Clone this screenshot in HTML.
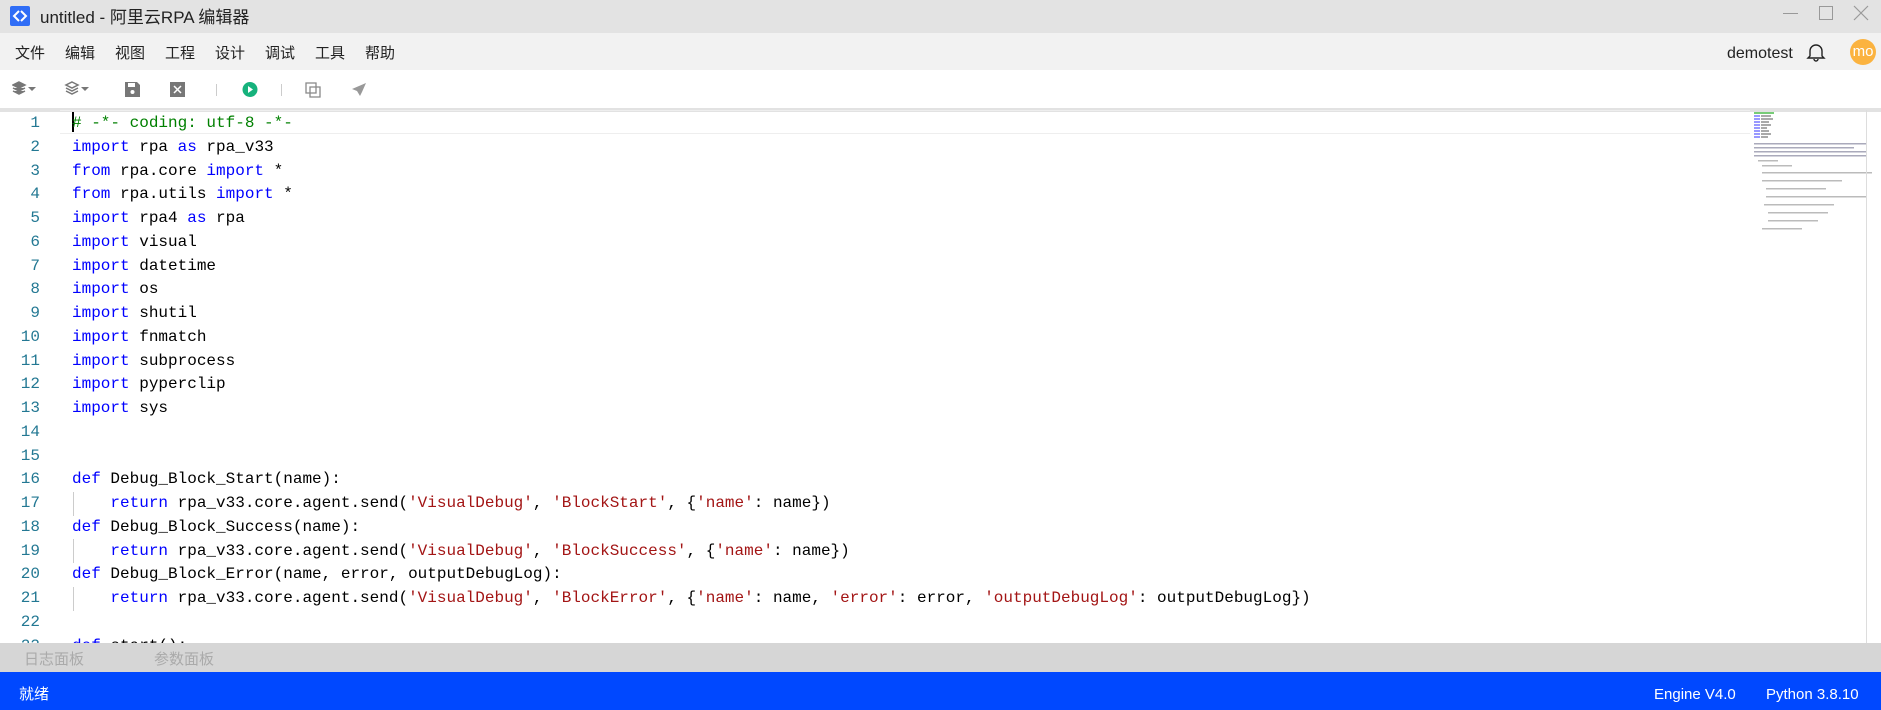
<!DOCTYPE html>
<html><head><meta charset="utf-8"><style>
*{margin:0;padding:0;box-sizing:border-box}
body{width:1881px;height:710px;overflow:hidden;background:#fff;font-family:"Liberation Sans","Noto Sans CJK SC",sans-serif;position:relative}
.abs{position:absolute}
#title{left:0;top:0;width:1881px;height:33px;background:#e3e3e3}
#menu{left:0;top:33px;width:1881px;height:37px;background:#f2f2f2}
#menu span{position:absolute;top:9px;font-size:15px;color:#222}
#tool{left:0;top:70px;width:1881px;height:38px;background:#fff}
#sep{left:0;top:108px;width:1881px;height:4px;background:#e2e2e2}
#code{left:0;top:110px;width:1750px;height:533px;overflow:hidden;font-family:"Liberation Mono",monospace;font-size:16px}
.ln{position:absolute;left:0;width:40px;text-align:right;color:#237893}
.tx{position:absolute;left:72px;white-space:pre;color:#000}
.k{color:#0000ff}.s{color:#a31515}.c{color:#008000}
#tabs{left:0;top:643px;width:1881px;height:29px;background:#d6d6d6}
#status{left:0;top:672px;width:1881px;height:38px;background:#0048ff;color:#fff;font-size:15px}
</style></head><body>
<div id="title" class="abs">
 <div class="abs" style="left:10px;top:6px;width:20px;height:20px;background:#2f6df6;border-radius:2px"></div>
 <svg class="abs" style="left:10px;top:6px" width="20" height="20"><path d="M9 5L4 10L9 15M11 5L16 10L11 15" stroke="#fff" stroke-width="2" fill="none"/></svg>
 <div class="abs" style="left:40px;top:3px;font-size:17px;color:#222">untitled - 阿里云RPA 编辑器</div>
 <div class="abs" style="left:1783px;top:13px;width:15px;height:1px;background:#999"></div>
 <div class="abs" style="left:1819px;top:6px;width:14px;height:14px;border:1px solid #999"></div>
 <svg class="abs" style="left:1853px;top:5px" width="16" height="16"><path d="M1 1L15 15M15 1L1 15" stroke="#999" stroke-width="1.2"/></svg>
</div>
<div id="menu" class="abs">
 <span style="left:15px">文件</span><span style="left:65px">编辑</span><span style="left:115px">视图</span><span style="left:165px">工程</span><span style="left:215px">设计</span><span style="left:265px">调试</span><span style="left:315px">工具</span><span style="left:365px">帮助</span>
 <span style="left:1727px;top:12px;font-size:16px">demotest</span>
 <svg class="abs" style="left:1806px;top:9px" width="20" height="20"><path d="M4 14V9a6 6 0 0 1 12 0v5l2 2H2z M8 17a2 2 0 0 0 4 0" stroke="#222" stroke-width="1.4" fill="none"/></svg>
 <div class="abs" style="left:1850px;top:6px;width:26px;height:26px;border-radius:50%;background:#fbb340;color:#fff;font-size:15px;text-align:center;line-height:25px">mo</div>
</div>
<div id="tool" class="abs">
 <svg class="abs" style="left:12px;top:11px" width="90" height="18" fill="#777">
  <path d="M7 1L13 4L7 7L1 4z M1 7L7 10L13 7 M1 10L7 13L13 10" stroke="#777" stroke-width="1.5"/><path d="M16 6h8l-4 4z"/>
  <path d="M60 1L66 4L60 7L54 4z M54 7L60 10L66 7 M54 10L60 13L66 10" stroke="#777" stroke-width="1.5" fill="none"/><path d="M69 6h8l-4 4z"/>
 </svg>
 <svg class="abs" style="left:124px;top:11px" width="250" height="18">
  <path d="M1 1h12l3 3v12H1z" fill="#777"/><rect x="4" y="2" width="7" height="4" fill="#fff"/><circle cx="8.5" cy="11" r="2" fill="#fff"/>
  <rect x="46" y="1" width="15" height="15" fill="#777"/><path d="M50 5L57 12M57 5L50 12" stroke="#fff" stroke-width="1.5"/>
  <rect x="92" y="3" width="1" height="12" fill="#ccc"/>
  <circle cx="126" cy="8.5" r="7.5" fill="#16b27c"/><path d="M124 5v7l5-3.5z" fill="#fff"/>
  <rect x="157" y="3" width="1" height="12" fill="#ccc"/>
  <path d="M182 2h10v10h-10z M186 6h10v10h-10z" stroke="#888" stroke-width="1.3" fill="none"/>
  <path d="M242 2L228 8L233 10L236 15L238 11z" fill="#999"/>
 </svg>
</div>
<div id="sep" class="abs"></div>
<div id="code" class="abs">
 <div class="abs" style="left:60px;top:0;width:1690px;height:24px;border-top:1px solid #eee;border-bottom:1px solid #eee"></div>
 <div class="abs" style="left:72px;top:2px;width:2px;height:20px;background:#000"></div>
 <div class="abs" style="left:73px;top:382px;width:1px;height:24px;background:#ccc"></div>
 <div class="abs" style="left:73px;top:429px;width:1px;height:24px;background:#ccc"></div>
 <div class="abs" style="left:73px;top:477px;width:1px;height:24px;background:#ccc"></div>
 <div style="position:absolute;top:2px;left:0;width:1750px;line-height:23.75px">
 <div style="position:relative;height:23.75px"><span class="ln">1</span><span class="tx c"># -*- coding: utf-8 -*-</span></div>
 <div style="position:relative;height:23.75px"><span class="ln">2</span><span class="tx"><span class="k">import</span> rpa <span class="k">as</span> rpa_v33</span></div>
 <div style="position:relative;height:23.75px"><span class="ln">3</span><span class="tx"><span class="k">from</span> rpa.core <span class="k">import</span> *</span></div>
 <div style="position:relative;height:23.75px"><span class="ln">4</span><span class="tx"><span class="k">from</span> rpa.utils <span class="k">import</span> *</span></div>
 <div style="position:relative;height:23.75px"><span class="ln">5</span><span class="tx"><span class="k">import</span> rpa4 <span class="k">as</span> rpa</span></div>
 <div style="position:relative;height:23.75px"><span class="ln">6</span><span class="tx"><span class="k">import</span> visual</span></div>
 <div style="position:relative;height:23.75px"><span class="ln">7</span><span class="tx"><span class="k">import</span> datetime</span></div>
 <div style="position:relative;height:23.75px"><span class="ln">8</span><span class="tx"><span class="k">import</span> os</span></div>
 <div style="position:relative;height:23.75px"><span class="ln">9</span><span class="tx"><span class="k">import</span> shutil</span></div>
 <div style="position:relative;height:23.75px"><span class="ln">10</span><span class="tx"><span class="k">import</span> fnmatch</span></div>
 <div style="position:relative;height:23.75px"><span class="ln">11</span><span class="tx"><span class="k">import</span> subprocess</span></div>
 <div style="position:relative;height:23.75px"><span class="ln">12</span><span class="tx"><span class="k">import</span> pyperclip</span></div>
 <div style="position:relative;height:23.75px"><span class="ln">13</span><span class="tx"><span class="k">import</span> sys</span></div>
 <div style="position:relative;height:23.75px"><span class="ln">14</span></div>
 <div style="position:relative;height:23.75px"><span class="ln">15</span></div>
 <div style="position:relative;height:23.75px"><span class="ln">16</span><span class="tx"><span class="k">def</span> Debug_Block_Start(name):</span></div>
 <div style="position:relative;height:23.75px"><span class="ln">17</span><span class="tx">    <span class="k">return</span> rpa_v33.core.agent.send(<span class="s">'VisualDebug'</span>, <span class="s">'BlockStart'</span>, {<span class="s">'name'</span>: name})</span></div>
 <div style="position:relative;height:23.75px"><span class="ln">18</span><span class="tx"><span class="k">def</span> Debug_Block_Success(name):</span></div>
 <div style="position:relative;height:23.75px"><span class="ln">19</span><span class="tx">    <span class="k">return</span> rpa_v33.core.agent.send(<span class="s">'VisualDebug'</span>, <span class="s">'BlockSuccess'</span>, {<span class="s">'name'</span>: name})</span></div>
 <div style="position:relative;height:23.75px"><span class="ln">20</span><span class="tx"><span class="k">def</span> Debug_Block_Error(name, error, outputDebugLog):</span></div>
 <div style="position:relative;height:23.75px"><span class="ln">21</span><span class="tx">    <span class="k">return</span> rpa_v33.core.agent.send(<span class="s">'VisualDebug'</span>, <span class="s">'BlockError'</span>, {<span class="s">'name'</span>: name, <span class="s">'error'</span>: error, <span class="s">'outputDebugLog'</span>: outputDebugLog})</span></div>
 <div style="position:relative;height:23.75px"><span class="ln">22</span></div>
 <div style="position:relative;height:23.75px"><span class="ln">23</span><span class="tx"><span class="k">def</span> start():</span></div>
 </div>
</div>
<svg class="abs" style="left:1754px;top:110px" width="127" height="533">
 <rect x="0" y="2" width="20" height="2" fill="#7c7"/>
 <g fill="#99f"><rect x="0" y="5" width="6" height="2"/><rect x="0" y="8" width="6" height="2"/><rect x="0" y="11" width="6" height="2"/><rect x="0" y="14" width="6" height="2"/><rect x="0" y="17" width="6" height="2"/><rect x="0" y="20" width="6" height="2"/><rect x="0" y="23" width="6" height="2"/><rect x="0" y="26" width="6" height="2"/></g>
 <g fill="#aaa"><rect x="7" y="5" width="10" height="2"/><rect x="7" y="8" width="12" height="2"/><rect x="7" y="11" width="8" height="2"/><rect x="7" y="14" width="10" height="2"/><rect x="7" y="17" width="6" height="2"/><rect x="7" y="20" width="8" height="2"/><rect x="7" y="23" width="10" height="2"/><rect x="7" y="26" width="7" height="2"/></g>
 <g fill="#aab"><rect x="0" y="33" width="112" height="1.5"/><rect x="0" y="37" width="100" height="1.5"/><rect x="0" y="41" width="112" height="1.5"/><rect x="0" y="45" width="112" height="1.5"/></g>
 <g fill="#bbb"><rect x="4" y="50" width="20" height="1.5"/><rect x="8" y="55" width="30" height="1.5"/><rect x="8" y="62" width="110" height="1.5"/><rect x="8" y="70" width="80" height="1.5"/><rect x="12" y="78" width="60" height="1.5"/><rect x="12" y="86" width="100" height="1.5"/><rect x="10" y="94" width="70" height="1.5"/><rect x="14" y="102" width="60" height="1.5"/><rect x="14" y="110" width="50" height="1.5"/><rect x="8" y="118" width="40" height="1.5"/></g>
 <rect x="112" y="0" width="1" height="533" fill="#ddd"/>
</svg>
<div id="tabs" class="abs">
 <span class="abs" style="left:24px;top:5px;font-size:15px;color:#aaa">日志面板</span>
 <span class="abs" style="left:154px;top:5px;font-size:15px;color:#aaa">参数面板</span>
</div>
<div id="status" class="abs">
 <span class="abs" style="left:19px;top:11px">就绪</span>
 <span class="abs" style="left:1654px;top:14px">Engine V4.0</span>
 <span class="abs" style="left:1766px;top:14px">Python 3.8.10</span>
</div>
</body></html>
